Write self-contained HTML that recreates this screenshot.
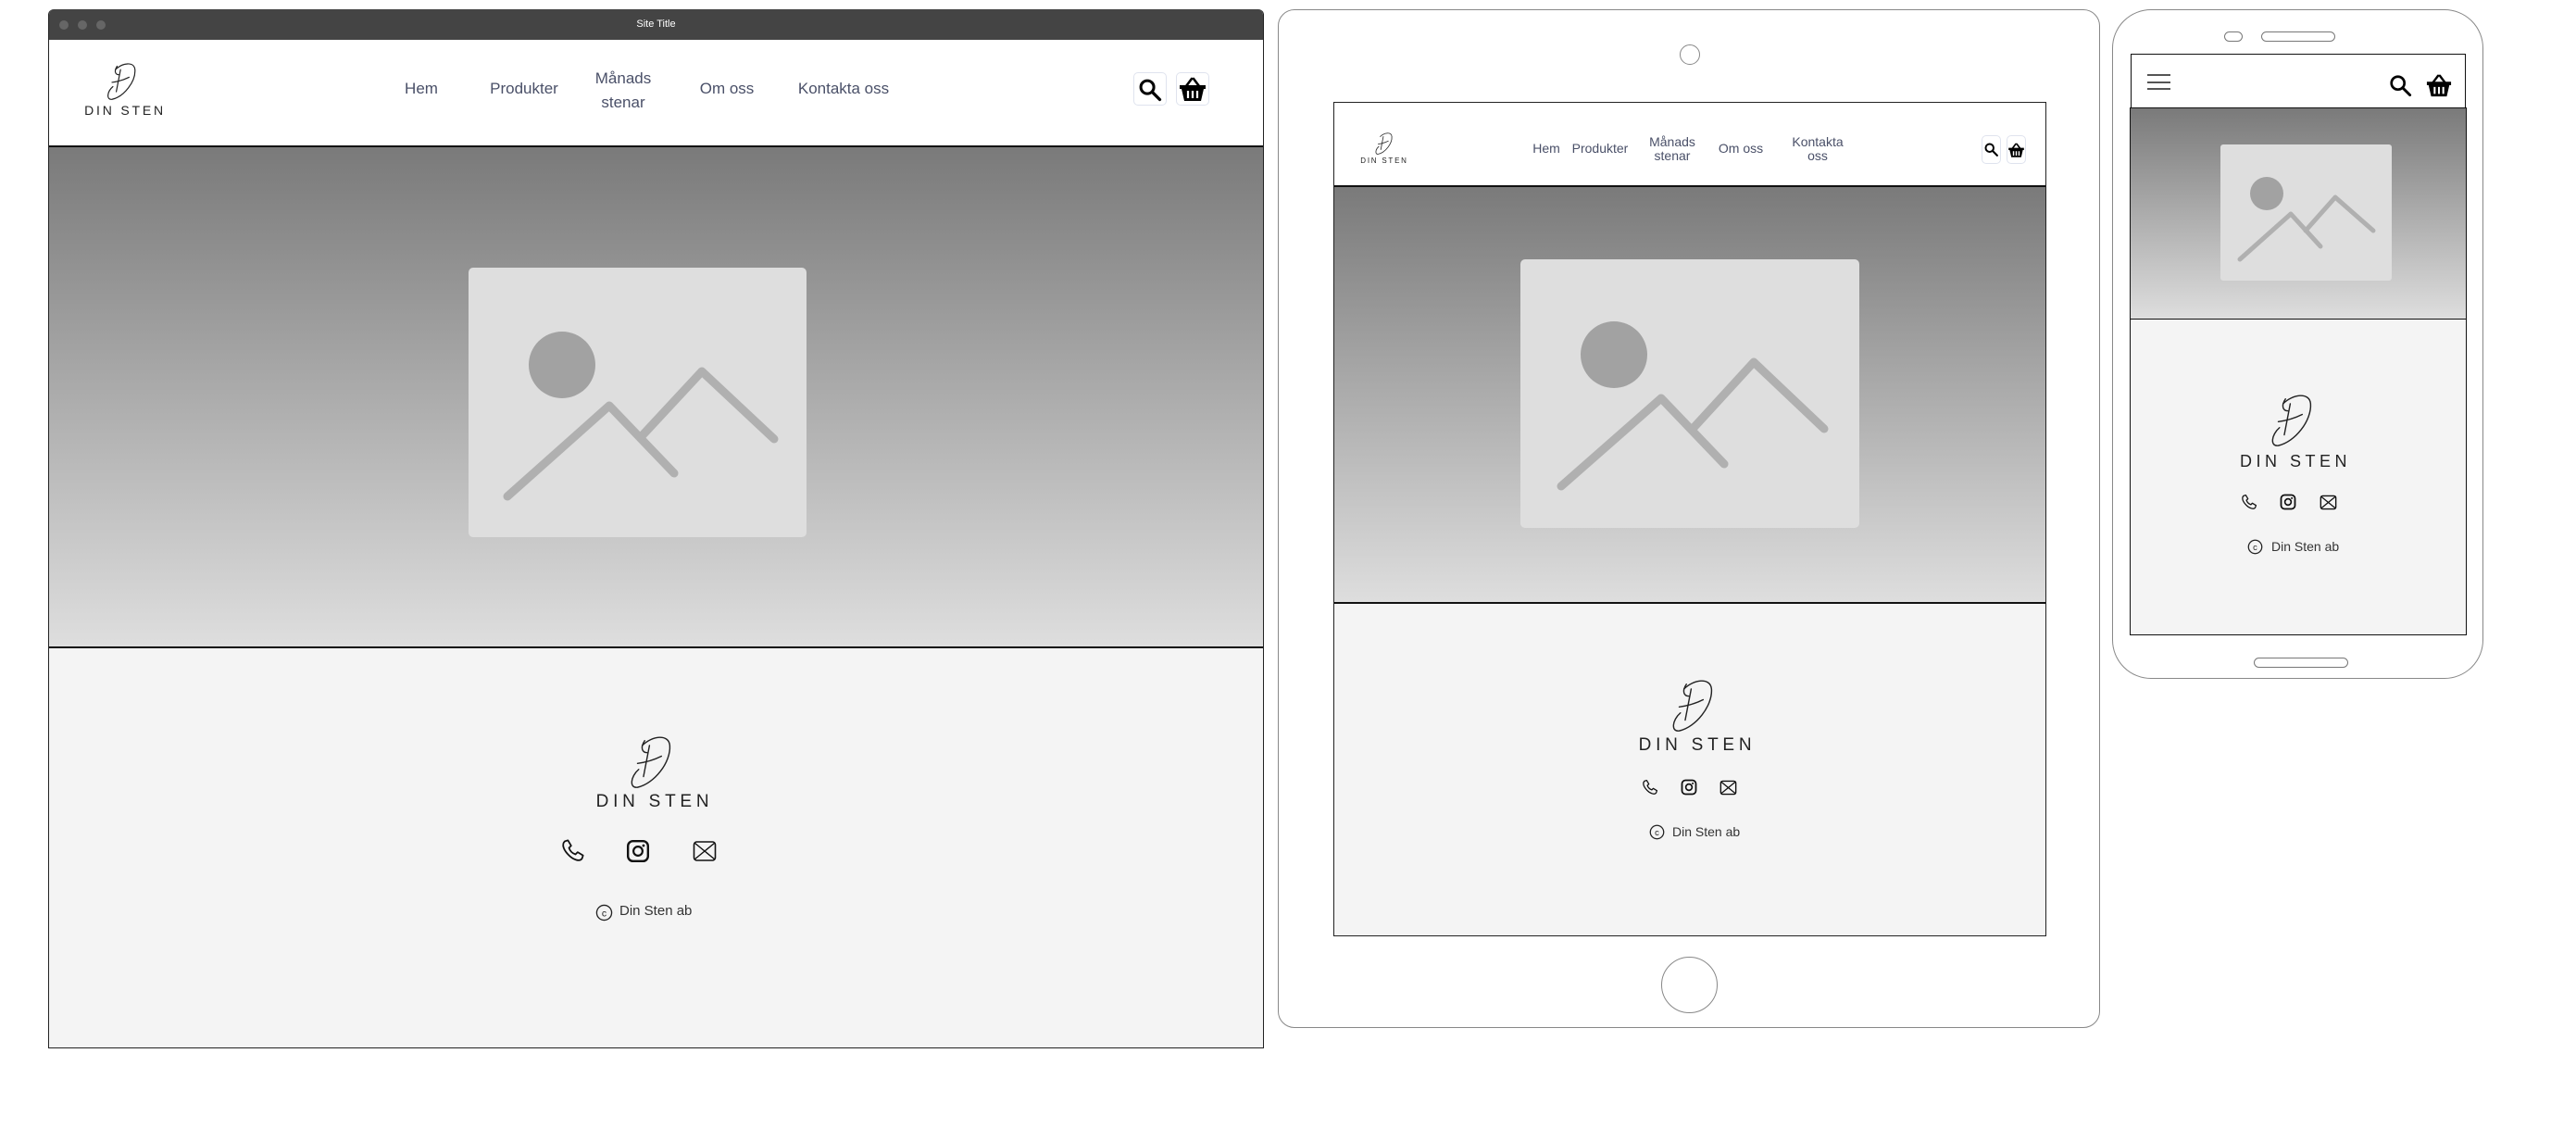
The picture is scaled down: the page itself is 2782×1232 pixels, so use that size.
<!DOCTYPE html>
<html><head><meta charset="utf-8"><style>
*{margin:0;padding:0;box-sizing:border-box}
body{width:2782px;height:1232px;background:#fff;position:relative;overflow:hidden;font-family:"Liberation Sans",sans-serif}
.a{position:absolute}
.hero{background:linear-gradient(#7a7a7a,#dedede)}
.foot{background:#f4f4f4}
.nav{color:#4a5068;text-align:center;line-height:1.15}
.brand{color:#222;letter-spacing:.32em;white-space:nowrap;text-align:center}
.btn{border:1px solid #dfe3ee;border-radius:5px;background:#fff}
</style></head><body>

<!-- ============ DESKTOP ============ -->
<div class="a" style="left:52px;top:10px;width:1313px;height:1122px;border:1px solid #222;border-top:none;border-radius:6px 6px 0 0;overflow:hidden">
  <div class="a" style="left:0;top:0;width:100%;height:33px;background:#444"></div>
  <div class="a" style="left:11px;top:12px;width:10px;height:10px;border-radius:50%;background:#666"></div>
  <div class="a" style="left:31px;top:12px;width:10px;height:10px;border-radius:50%;background:#666"></div>
  <div class="a" style="left:51px;top:12px;width:10px;height:10px;border-radius:50%;background:#666"></div>
  <div class="a" style="left:0;top:10px;width:100%;text-align:center;color:#fff;font-size:11px">Site Title</div>
  <div class="a" style="left:0;top:33px;width:100%;height:116px;background:#fff;border-bottom:2px solid #111"></div>
  <div class="a hero" style="left:0;top:149px;width:100%;height:539px"></div>
  <div class="a foot" style="left:0;top:688px;width:100%;height:434px;border-top:2px solid #111"></div>
</div>
<svg class="a" style="left:112px;top:66px" width="40" height="44" viewBox="0 0 40 48"><g fill="none" stroke="#222" stroke-width="1.3" stroke-linecap="round"><path d="M12 10C20 2 34 0 35 10C36 24 22 42 8 45C1 46 2 36 9 30"/><path d="M14 6C10 12 12 16 16 16"/><path d="M18 10L13 36"/><path d="M8 25C16 24 22 22 28 19"/></g></svg>
<div class="a brand" style="left:80px;top:111px;width:110px;font-size:14px;letter-spacing:.2em">DIN STEN</div>
<div class="a nav" style="left:420px;top:86px;width:70px;font-size:17px">Hem</div>
<div class="a nav" style="left:516px;top:86px;width:100px;font-size:17px">Produkter</div>
<div class="a nav" style="left:628px;top:72px;width:90px;font-size:17px;line-height:26px">Månads<br>stenar</div>
<div class="a nav" style="left:745px;top:86px;width:80px;font-size:17px">Om oss</div>
<div class="a nav" style="left:851px;top:86px;width:120px;font-size:17px">Kontakta oss</div>
<div class="a btn" style="left:1224px;top:78px;width:36px;height:36px"></div>
<div class="a btn" style="left:1270px;top:78px;width:36px;height:36px"></div>
<svg class="a" style="left:1228px;top:83px" width="28" height="28" viewBox="0 0 24 24"><circle cx="9.5" cy="9.5" r="6" fill="none" stroke="#000" stroke-width="2.6"/><path d="M14 14L21 21" stroke="#000" stroke-width="2.8" stroke-linecap="round"/></svg>
<svg class="a" style="left:1272px;top:81px" width="32" height="30" viewBox="0 0 32 30"><path d="M9 12L15 4M23 12L17 4" stroke="#000" stroke-width="2.6" stroke-linecap="round"/><path d="M2 11H30V15H28L25 28H7L4 15H2Z" fill="#000"/><path d="M11 17V25M16 17V25M21 17V25" stroke="#fff" stroke-width="2.2"/></svg>
<div class="a" style="left:506px;top:289px;width:365px;height:291px;background:#dedede;border-radius:5px"></div>
<svg class="a" style="left:506px;top:289px" width="365" height="291"><circle cx="101" cy="105" r="36" fill="#a2a2a2"/><g fill="none" stroke="#b0b0b0" stroke-width="9" stroke-linecap="round" stroke-linejoin="round"><path d="M42 247L152 149L222 222"/><path d="M186 183L252 112L330 185"/></g></svg>
<svg class="a" style="left:677px;top:792px" width="54" height="62" viewBox="0 0 40 48"><g fill="none" stroke="#222" stroke-width="1.1" stroke-linecap="round"><path d="M12 10C20 2 34 0 35 10C36 24 22 42 8 45C1 46 2 36 9 30"/><path d="M14 6C10 12 12 16 16 16"/><path d="M18 10L13 36"/><path d="M8 25C16 24 22 22 28 19"/></g></svg>
<div class="a brand" style="left:637px;top:855px;width:140px;font-size:19px;letter-spacing:.25em">DIN STEN</div>
<svg class="a" style="left:604px;top:905px" width="28" height="28" viewBox="0 0 24 24"><path d="M5 3L8 2L11 7L9 9C10 12 12 14 15 15L17 13L22 16L21 19C19 22 13 20 9 16C4 11 2 6 5 3Z" fill="none" stroke="#111" stroke-width="1.5" stroke-linejoin="round"/></svg>
<svg class="a" style="left:676px;top:906px" width="26" height="26" viewBox="0 0 24 24"><rect x="2" y="2" width="20" height="20" rx="5" fill="none" stroke="#111" stroke-width="2.2"/><circle cx="12" cy="12" r="4.5" fill="none" stroke="#111" stroke-width="2"/><circle cx="17.5" cy="6.5" r="1.3" fill="#111"/></svg>
<svg class="a" style="left:748px;top:907px" width="26" height="24" viewBox="0 0 26 24"><rect x="1.5" y="2" width="23" height="20" rx="3" fill="none" stroke="#111" stroke-width="1.6"/><path d="M2 3L24 21M24 3L2 21" stroke="#111" stroke-width="1.4"/></svg>
<svg class="a" style="left:643px;top:976px" width="19" height="19" viewBox="0 0 20 20"><circle cx="10" cy="10" r="8.5" fill="none" stroke="#222" stroke-width="1.4"/><text x="10" y="14" font-size="11" text-anchor="middle" font-family="Liberation Sans" fill="#222">c</text></svg>
<div class="a" style="left:669px;top:975px;font-size:15px;color:#333">Din Sten ab</div>

<!-- ============ TABLET ============ -->
<div class="a" style="left:1380px;top:10px;width:888px;height:1100px;border:1.5px solid #888;border-radius:18px"></div>
<div class="a" style="left:1814px;top:48px;width:22px;height:22px;border:1px solid #888;border-radius:50%"></div>
<div class="a" style="left:1794px;top:1033px;width:61px;height:61px;border:1px solid #888;border-radius:50%"></div>
<div class="a" style="left:1440px;top:110px;width:770px;height:901px;border:1.5px solid #222;overflow:hidden">
  <div class="a" style="left:0;top:0;width:100%;height:91px;background:#fff;border-bottom:2px solid #111"></div>
  <div class="a hero" style="left:0;top:91px;width:100%;height:449px"></div>
  <div class="a foot" style="left:0;top:539px;width:100%;height:362px;border-top:2px solid #111"></div>
</div>
<svg class="a" style="left:1484px;top:142px" width="22" height="26" viewBox="0 0 40 48"><g fill="none" stroke="#333" stroke-width="1.6" stroke-linecap="round"><path d="M12 10C20 2 34 0 35 10C36 24 22 42 8 45C1 46 2 36 9 30"/><path d="M18 10L13 36"/><path d="M8 25C16 24 22 22 28 19"/></g></svg>
<div class="a brand" style="left:1465px;top:169px;width:60px;font-size:8px;letter-spacing:.22em">DIN STEN</div>
<div class="a nav" style="left:1650px;top:152px;width:40px;font-size:14px">Hem</div>
<div class="a nav" style="left:1692px;top:152px;width:72px;font-size:14px">Produkter</div>
<div class="a nav" style="left:1775px;top:146px;width:62px;font-size:14px;line-height:15px">Månads<br>stenar</div>
<div class="a nav" style="left:1850px;top:152px;width:60px;font-size:14px">Om oss</div>
<div class="a nav" style="left:1928px;top:146px;width:70px;font-size:14px;line-height:15px">Kontakta<br>oss</div>
<div class="a btn" style="left:2140px;top:146px;width:21px;height:31px"></div>
<div class="a btn" style="left:2167px;top:146px;width:21px;height:31px"></div>
<svg class="a" style="left:2142px;top:153px" width="17" height="17" viewBox="0 0 24 24"><circle cx="9.5" cy="9.5" r="6" fill="none" stroke="#000" stroke-width="2.8"/><path d="M14 14L21 21" stroke="#000" stroke-width="3" stroke-linecap="round"/></svg>
<svg class="a" style="left:2168px;top:153px" width="19" height="18" viewBox="0 0 32 30"><path d="M9 12L15 4M23 12L17 4" stroke="#000" stroke-width="2.8" stroke-linecap="round"/><path d="M2 11H30V15H28L25 28H7L4 15H2Z" fill="#000"/><path d="M11 17V25M16 17V25M21 17V25" stroke="#fff" stroke-width="2.4"/></svg>
<div class="a" style="left:1642px;top:280px;width:366px;height:290px;background:#dedede;border-radius:5px"></div>
<svg class="a" style="left:1642px;top:280px" width="366" height="290"><circle cx="101" cy="103" r="36" fill="#a2a2a2"/><g fill="none" stroke="#b0b0b0" stroke-width="9" stroke-linecap="round" stroke-linejoin="round"><path d="M44 245L152 150L220 221"/><path d="M186 183L252 111L328 183"/></g></svg>
<svg class="a" style="left:1802px;top:731px" width="54" height="62" viewBox="0 0 40 48"><g fill="none" stroke="#222" stroke-width="1.1" stroke-linecap="round"><path d="M12 10C20 2 34 0 35 10C36 24 22 42 8 45C1 46 2 36 9 30"/><path d="M14 6C10 12 12 16 16 16"/><path d="M18 10L13 36"/><path d="M8 25C16 24 22 22 28 19"/></g></svg>
<div class="a brand" style="left:1763px;top:794px;width:140px;font-size:19px;letter-spacing:.25em">DIN STEN</div>
<svg class="a" style="left:1772px;top:841px" width="19" height="19" viewBox="0 0 24 24"><path d="M5 3L8 2L11 7L9 9C10 12 12 14 15 15L17 13L22 16L21 19C19 22 13 20 9 16C4 11 2 6 5 3Z" fill="none" stroke="#111" stroke-width="1.6" stroke-linejoin="round"/></svg>
<svg class="a" style="left:1815px;top:841px" width="18" height="18" viewBox="0 0 24 24"><rect x="2" y="2" width="20" height="20" rx="5" fill="none" stroke="#111" stroke-width="2.4"/><circle cx="12" cy="12" r="4.5" fill="none" stroke="#111" stroke-width="2.2"/><circle cx="17.5" cy="6.5" r="1.4" fill="#111"/></svg>
<svg class="a" style="left:1857px;top:842px" width="19" height="17" viewBox="0 0 26 24"><rect x="1.5" y="2" width="23" height="20" rx="3" fill="none" stroke="#111" stroke-width="2"/><path d="M2 3L24 21M24 3L2 21" stroke="#111" stroke-width="1.8"/></svg>
<svg class="a" style="left:1781px;top:890px" width="17" height="17" viewBox="0 0 20 20"><circle cx="10" cy="10" r="8.5" fill="none" stroke="#222" stroke-width="1.5"/><text x="10" y="14" font-size="11" text-anchor="middle" font-family="Liberation Sans" fill="#222">c</text></svg>
<div class="a" style="left:1806px;top:890px;font-size:14px;color:#333">Din Sten ab</div>

<!-- ============ PHONE ============ -->
<div class="a" style="left:2281px;top:10px;width:401px;height:723px;border:1.5px solid #888;border-radius:42px"></div>
<div class="a" style="left:2402px;top:34px;width:20px;height:11px;border:1px solid #777;border-radius:6px"></div>
<div class="a" style="left:2442px;top:34px;width:80px;height:11px;border:1px solid #777;border-radius:6px"></div>
<div class="a" style="left:2434px;top:710px;width:102px;height:11px;border:1px solid #777;border-radius:6px"></div>
<div class="a" style="left:2301px;top:58px;width:362px;height:58px;border:1.5px solid #111;border-bottom:none;background:#fff"></div>
<div class="a hero" style="left:2300px;top:116px;width:364px;height:229px;border:1.5px solid #111;border-bottom:none"></div>
<div class="a foot" style="left:2300px;top:344px;width:364px;height:342px;border:1.5px solid #111"></div>
<div class="a" style="left:2319px;top:80px;width:25px;height:2px;background:#555"></div>
<div class="a" style="left:2319px;top:88px;width:25px;height:2px;background:#555"></div>
<div class="a" style="left:2319px;top:95px;width:25px;height:2px;background:#555"></div>
<svg class="a" style="left:2579px;top:79px" width="27" height="27" viewBox="0 0 24 24"><circle cx="9.5" cy="9.5" r="6.2" fill="none" stroke="#000" stroke-width="2.4"/><path d="M14 14L21 21" stroke="#000" stroke-width="2.6" stroke-linecap="round"/></svg>
<svg class="a" style="left:2617px;top:78px" width="34" height="28" viewBox="0 0 32 30"><path d="M9 12L15 4M23 12L17 4" stroke="#000" stroke-width="2.6" stroke-linecap="round"/><path d="M2 11H30V15H28L25 28H7L4 15H2Z" fill="#000"/><path d="M11 17V25M16 17V25M21 17V25" stroke="#fff" stroke-width="2.2"/></svg>
<div class="a" style="left:2398px;top:156px;width:185px;height:147px;background:#dedede;border-radius:3px"></div>
<svg class="a" style="left:2398px;top:156px" width="185" height="147"><circle cx="50" cy="53" r="18" fill="#a2a2a2"/><g fill="none" stroke="#b0b0b0" stroke-width="5" stroke-linecap="round" stroke-linejoin="round"><path d="M21 124L76 75L108 110"/><path d="M92 93L124 57L165 93"/></g></svg>
<svg class="a" style="left:2450px;top:423px" width="52" height="62" viewBox="0 0 40 48"><g fill="none" stroke="#222" stroke-width="1.1" stroke-linecap="round"><path d="M12 10C20 2 34 0 35 10C36 24 22 42 8 45C1 46 2 36 9 30"/><path d="M14 6C10 12 12 16 16 16"/><path d="M18 10L13 36"/><path d="M8 25C16 24 22 22 28 19"/></g></svg>
<div class="a brand" style="left:2409px;top:488px;width:140px;font-size:18px;letter-spacing:.25em">DIN STEN</div>
<svg class="a" style="left:2419px;top:533px" width="19" height="19" viewBox="0 0 24 24"><path d="M5 3L8 2L11 7L9 9C10 12 12 14 15 15L17 13L22 16L21 19C19 22 13 20 9 16C4 11 2 6 5 3Z" fill="none" stroke="#111" stroke-width="1.6" stroke-linejoin="round"/></svg>
<svg class="a" style="left:2462px;top:533px" width="18" height="18" viewBox="0 0 24 24"><rect x="2" y="2" width="20" height="20" rx="5" fill="none" stroke="#111" stroke-width="2.4"/><circle cx="12" cy="12" r="4.5" fill="none" stroke="#111" stroke-width="2.2"/><circle cx="17.5" cy="6.5" r="1.4" fill="#111"/></svg>
<svg class="a" style="left:2505px;top:534px" width="19" height="17" viewBox="0 0 26 24"><rect x="1.5" y="2" width="23" height="20" rx="3" fill="none" stroke="#111" stroke-width="2"/><path d="M2 3L24 21M24 3L2 21" stroke="#111" stroke-width="1.8"/></svg>
<svg class="a" style="left:2427px;top:582px" width="17" height="17" viewBox="0 0 20 20"><circle cx="10" cy="10" r="8.5" fill="none" stroke="#222" stroke-width="1.5"/><text x="10" y="14" font-size="11" text-anchor="middle" font-family="Liberation Sans" fill="#222">c</text></svg>
<div class="a" style="left:2453px;top:582px;font-size:14px;color:#333">Din Sten ab</div>

</body></html>
